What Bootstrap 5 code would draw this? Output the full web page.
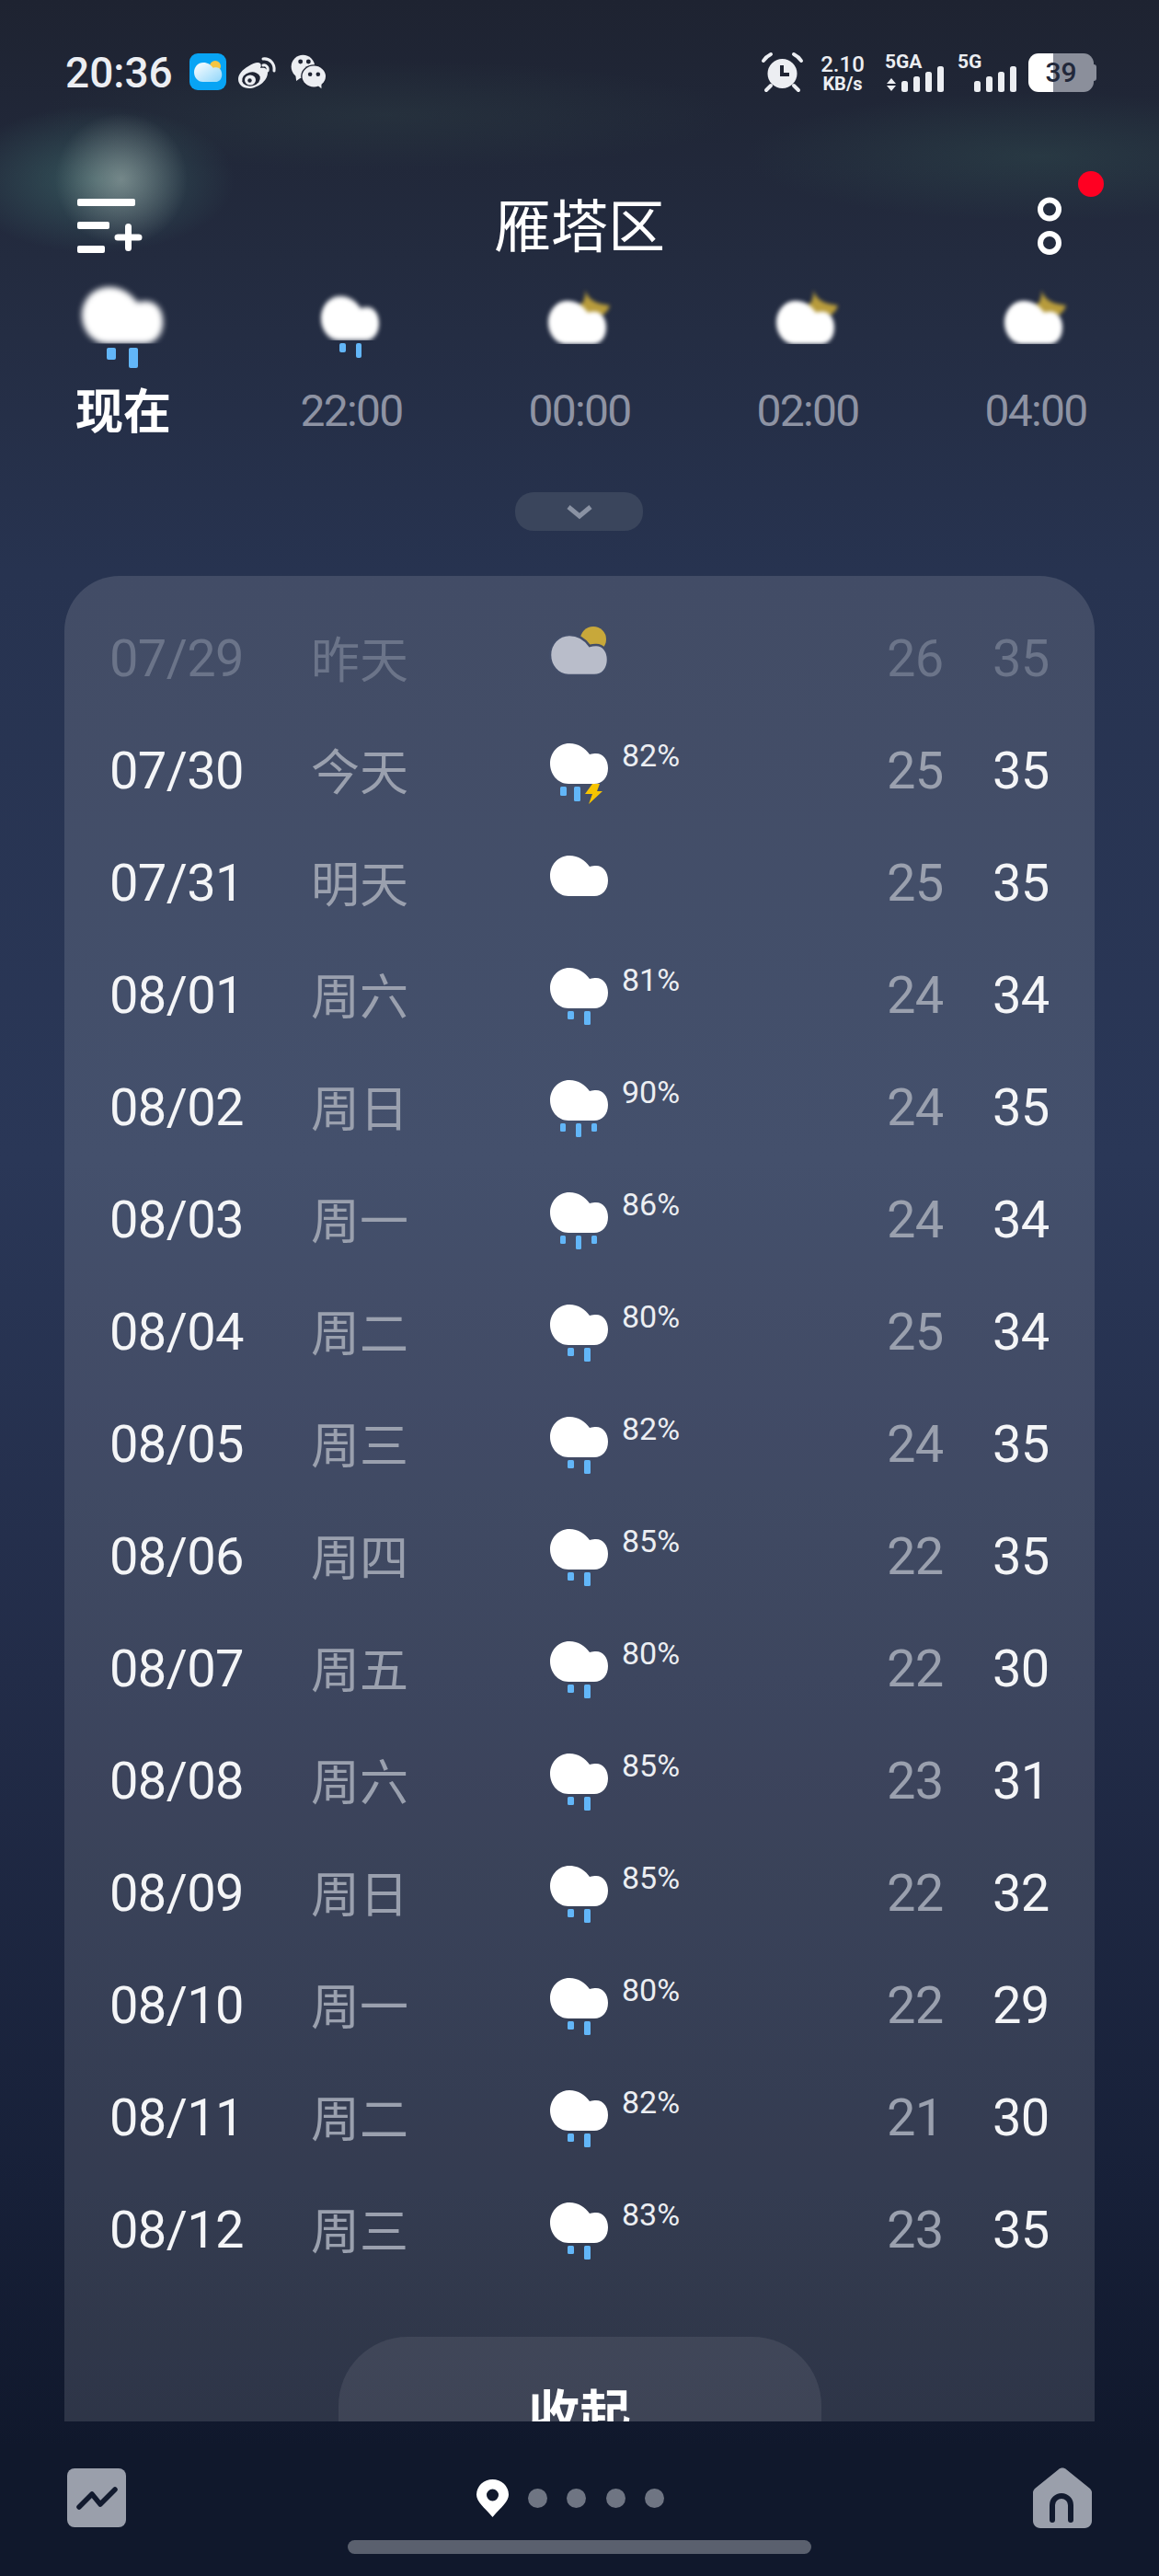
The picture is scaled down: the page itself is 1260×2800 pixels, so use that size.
<!DOCTYPE html>
<html lang="zh-CN">
<head>
    <meta charset="UTF-8">
    <title>雁塔区</title>
    <link href="https://cdn.jsdelivr.net/npm/bootstrap@5.3.3/dist/css/bootstrap.min.css" rel="stylesheet">
    <style>
        body {
            background: #10182c;
            font-family: Roboto, "Noto Sans CJK SC", sans-serif;
            color: #fff;
        }
        svg { display: block; flex: none; overflow: visible; }
        .screen {
            width: 1260px;
            height: 2800px;
            overflow: hidden;
            background:
                radial-gradient(ellipse 72px 72px at 132px 195px, rgba(190,200,195,.48), rgba(190,200,195,0)),
                radial-gradient(ellipse 150px 80px at 105px 195px, rgba(70,125,120,.5), rgba(70,125,120,0)),
                radial-gradient(ellipse 380px 60px at 420px 125px, rgba(65,100,90,.16), rgba(65,100,90,0)),
                radial-gradient(ellipse 320px 70px at 1130px 170px, rgba(60,105,95,.26), rgba(60,105,95,0)),
                linear-gradient(180deg, #1e2331 0, #232b3f 280px, #273350 620px, #2a3757 1260px, #222c48 1820px, #172038 2380px, #10182c 2660px);
        }

        /* status bar */
        .status-bar { padding: 58px 71px 0 71px; height: 100px; }
        .clock { font-size: 46px; line-height: 42px; font-weight: 500; color: #eceef2; width: 135px; }
        .weibo { margin: 4px 0 0 13px; }
        .net-speed { width: 50px; margin: 0 21px 0 19px; color: #eceef2; text-align: center; }
        .net-speed b { display: block; font-size: 24px; line-height: 24px; font-weight: 500; }
        .net-speed i { display: block; font-size: 20px; line-height: 20px; font-weight: 700; font-style: normal; margin-top: -1px; }
        .sig-text { font: 700 21px Roboto, sans-serif; fill: #eceef2; }
        .battery {
            width: 71px;
            height: 42px;
            margin-left: 13px;
            border-radius: 11px;
            background: linear-gradient(90deg, #fff 38%, #8b8f9b 38%);
            color: #22283a;
            font-size: 30px;
            font-weight: 500;
            line-height: 42px;
            text-align: center;
        }
        .battery::after {
            content: "";
            position: absolute;
            left: 71px;
            top: 12px;
            width: 3px;
            height: 18px;
            border-radius: 0 3px 3px 0;
            background: #8b8f9b;
        }

        /* header */
        .top-head {
            display: grid;
            grid-template-columns: 1fr auto 1fr;
            align-items: center;
            height: 100px;
            margin-top: 96px;
            padding: 0 84px;
        }
        .top-head h1 { font-size: 62px; font-weight: 400; margin: -7px 0 0; font-family: "Noto Sans CJK SC", sans-serif; }
        .more-wrap { margin: 0 22px 0 auto; }
        .red-dot { top: -29px; left: 44px; width: 28px; height: 28px; background: #ff0022; }

        /* hourly strip */
        .hour-strip { display: grid; grid-template-columns: repeat(5, 248px); padding: 0 10px; margin-top: 16px; }
        .hour-label { font-size: 48px; line-height: 60px; margin-top: 15px; color: #8e93a3; letter-spacing: -1.7px; }
        .hour-label.now { color: #fff; font-size: 52px; font-weight: 700; letter-spacing: 0; font-family: "Noto Sans CJK SC", sans-serif; margin-top: 12px; }
        .soft { filter: blur(2.2px); }
        .drop-down { width: 139px; height: 42px; margin: 58px 0 0 560px; border-radius: 20px; background: #3a455c; }

        /* daily panel */
        .day-panel {
            height: 2006px;
            margin: 49px 70px 0;
            padding-top: 28px;
            border-radius: 60px 60px 0 0;
            overflow: hidden;
            background: rgba(255,255,255,.125);
        }
        .day-row {
            grid-template-columns: 220px 259px 78px 288px 115px 1fr;
            height: 122px;
            padding-left: 49px;
        }
        .day-date { font-size: 56px; color: #f4f5f7; letter-spacing: -.6px; margin-top: 1px; }
        .day-name { font-size: 53px; color: #9aa0ae; margin-top: 0; margin-left: -1px; font-family: "Noto Sans CJK SC", sans-serif; font-weight: 400; }
        .day-icon { align-self: start; margin-top: 32px; }
        .day-pct { align-self: start; margin-top: 29px; font-size: 34px; line-height: 32px; color: #eceef2; }
        .day-low { font-size: 56px; color: #9aa0ae; letter-spacing: -.6px; margin-top: 1px; }
        .day-high { font-size: 56px; color: #f4f5f7; letter-spacing: -.6px; margin-top: 1px; }
        .day-row.past .day-date, .day-row.past .day-name, .day-row.past .day-low, .day-row.past .day-high { color: #6b7489; }
        .day-row.past .day-icon { margin-top: 36px; }
        .fold-btn {
            width: 525px;
            height: 130px;
            margin: 56px auto 0;
            padding-top: 47px;
            border-radius: 75px 75px 0 0;
            background: rgba(255,255,255,.08);
            font-family: "Noto Sans CJK SC", sans-serif;
            font-size: 56px;
            font-weight: 700;
            line-height: 65px;
            text-align: center;
        }

        /* bottom nav */
        .bottom-nav { height: 66px; margin-top: 50px; padding: 0 73px; }
        .page-dots { gap: 21.6px; margin-right: 20px; }
        .page-dots span { width: 21px; height: 21px; border-radius: 50%; background: #6f7583; }
        .pin { margin-right: -.6px; }
        .home-bar { width: 504px; height: 15px; margin: 13px auto 0; border-radius: 8px; background: #5a606e; }
    </style>
</head>
<body>
<svg width="0" height="0" class="position-absolute">
    <defs>
        <path id="cloudShape" d="M20 44C8 44 0 33 0 22 0 10 9 0 21 0c10 0 17 5 22 12 3-1 5-1 7-1 8 0 13 7 13 16 0 10-6 17-15 17Z"/>
        <clipPath id="cutBottom"><rect x="-10" y="-10" width="90" height="54"/></clipPath>
        <linearGradient id="appCloud" x1="0" y1="0" x2="1" y2="1">
            <stop offset="0" stop-color="#fff"/>
            <stop offset="1" stop-color="#8fd6fa"/>
        </linearGradient>
        <symbol id="moonCloud" viewBox="0 0 100 90">
            <path class="soft" d="M56 3c3 10 10 15 27 17-3 10-13 15-23 14-7-1-12-6-12-13 6-2 9-9 8-18Z" fill="#b89c3c"/>
            <g transform="translate(16 15) scale(1 1.07)"><g clip-path="url(#cutBottom)"><use href="#cloudShape" class="soft" fill="#fff"/></g></g>
        </symbol>
    </defs>
</svg>

<div class="screen d-flex flex-column">
    <!-- status bar -->
    <div class="status-bar d-flex justify-content-between">
        <div class="d-flex">
            <span class="clock">20:36</span>
            <svg width="40" height="40" viewBox="0 0 40 40">
                <rect width="40" height="40" rx="9" fill="#08a4f4"/>
                <circle cx="28" cy="14" r="6" fill="#f5c542"/>
                <use href="#cloudShape" fill="url(#appCloud)" transform="translate(5 10) scale(.48)"/>
            </svg>
            <svg class="weibo" width="42" height="35" viewBox="0 0 42 35">
                <path d="M11 10c6-4 11-5 13-3 1 1 1 3 0 5 5-1 8 1 8 5 0 9-11 17-20 17C5 34 0 30 0 24c0-5 4-10 11-14Z" fill="#eceef2"/>
                <ellipse cx="14" cy="24" rx="10" ry="7.5" transform="rotate(-14 14 24)" fill="#1f2433"/>
                <ellipse cx="13" cy="25" rx="6" ry="5.5" fill="#eceef2"/>
                <circle cx="12.5" cy="25.5" r="2.2" fill="#1f2433"/>
                <path d="M27 2c7-1 13 5 12 13M27 9c3-1 6 2 5 6" fill="none" stroke="#eceef2" stroke-width="3" stroke-linecap="round"/>
            </svg>
            <svg class="ms-2 ps-1" width="45" height="40" viewBox="-4 0 45 40">
                <ellipse cx="14" cy="14" rx="14" ry="14" fill="#eceef2"/>
                <path d="M5 23l1 8 7-5Z" fill="#eceef2"/>
                <circle cx="11" cy="8" r="2.7" fill="#1f2433"/>
                <circle cx="20.5" cy="8" r="2.7" fill="#1f2433"/>
                <ellipse cx="27" cy="25.5" rx="15.5" ry="14" fill="#1f2433"/>
                <ellipse cx="27" cy="25.5" rx="14" ry="12.5" fill="#eceef2"/>
                <path d="M31 36l5 4 0-7Z" fill="#eceef2"/>
                <circle cx="22.5" cy="23" r="2.5" fill="#1f2433"/>
                <circle cx="32" cy="23" r="2.5" fill="#1f2433"/>
            </svg>
        </div>
        <div class="d-flex">
            <svg width="43" height="42" viewBox="0 0 43 42">
                <path d="M1 8c2-3 4-5 8-7M42 8c-2-3-4-5-8-7M4 40l5-5M39 40l-5-5" fill="none" stroke="#eceef2" stroke-width="4" stroke-linecap="round"/>
                <circle cx="21.5" cy="22" r="16" fill="#eceef2"/>
                <path d="M21 13v10h8" fill="none" stroke="#1f2433" stroke-width="4"/>
            </svg>
            <div class="net-speed"><b>2.10</b><i>KB/s</i></div>
            <svg width="64" height="42" viewBox="0 0 64 42">
                <text class="sig-text" x="0" y="16">5GA</text>
                <path d="M7 27l5 6H2ZM7 41l-5-6h10Z" fill="#eceef2"/>
                <rect x="18" y="30" width="7" height="12" rx="2.5" fill="#eceef2"/>
                <rect x="31" y="25" width="7" height="17" rx="2.5" fill="#eceef2"/>
                <rect x="44" y="20" width="7" height="22" rx="2.5" fill="#eceef2"/>
                <rect x="57" y="14" width="7" height="28" rx="2.5" fill="#eceef2"/>
            </svg>
            <svg class="ms-3" width="63" height="42" viewBox="0 0 63 42">
                <text class="sig-text" x="-1" y="16">5G</text>
                <rect x="17" y="30" width="7" height="12" rx="2.5" fill="#eceef2"/>
                <rect x="30" y="25" width="7" height="17" rx="2.5" fill="#eceef2"/>
                <rect x="43" y="20" width="7" height="22" rx="2.5" fill="#eceef2"/>
                <rect x="56" y="14" width="7" height="28" rx="2.5" fill="#eceef2"/>
            </svg>
            <div class="battery position-relative">39</div>
        </div>
    </div>

    <!-- header -->
    <div class="top-head">
        <svg width="70" height="60" viewBox="0 0 70 60">
            <rect width="63" height="8" rx="2" fill="#fff"/>
            <rect y="25" width="35" height="8" rx="2" fill="#fff"/>
            <rect y="51" width="30" height="8" rx="2" fill="#fff"/>
            <path d="M55.5 30.500v23M44 42h23" stroke="#fff" stroke-width="7" stroke-linecap="round"/>
        </svg>
        <h1>雁塔区</h1>
        <div class="more-wrap position-relative">
            <svg width="26" height="62" viewBox="0 0 26 62">
                <ellipse cx="13" cy="12.5" rx="10" ry="10" fill="none" stroke="#fff" stroke-width="6"/>
                <ellipse cx="13" cy="49" rx="10" ry="10" fill="none" stroke="#fff" stroke-width="6"/>
            </svg>
            <span class="red-dot position-absolute rounded-circle"></span>
        </div>
    </div>

    <!-- hourly forecast -->
    <div class="hour-strip text-center">
        <div class="d-flex flex-column align-items-center">
            <svg width="100" height="90" viewBox="0 0 100 90">
                <g transform="translate(5 0) scale(1.4)"><g clip-path="url(#cutBottom)"><use href="#cloudShape" class="soft" fill="#fff"/></g></g>
                <rect x="32" y="66" width="10" height="13" rx="2" fill="#62b6f8"/>
                <rect x="56" y="66" width="10" height="22" rx="2" fill="#62b6f8"/>
            </svg>
            <div class="hour-label now">现在</div>
        </div>
        <div class="d-flex flex-column align-items-center">
            <svg width="100" height="90" viewBox="0 0 100 90">
                <g transform="translate(17 10) scale(1 1.09)"><g clip-path="url(#cutBottom)"><use href="#cloudShape" class="soft" fill="#fff"/></g></g>
                <rect x="37" y="61" width="7" height="10" rx="2" fill="#62b6f8"/>
                <rect x="55" y="61" width="6" height="16" rx="2" fill="#62b6f8"/>
            </svg>
            <div class="hour-label">22:00</div>
        </div>
        <div class="d-flex flex-column align-items-center">
            <svg width="100" height="90"><use href="#moonCloud" width="100" height="90"/></svg>
            <div class="hour-label">00:00</div>
        </div>
        <div class="d-flex flex-column align-items-center">
            <svg width="100" height="90"><use href="#moonCloud" width="100" height="90"/></svg>
            <div class="hour-label">02:00</div>
        </div>
        <div class="d-flex flex-column align-items-center">
            <svg width="100" height="90"><use href="#moonCloud" width="100" height="90"/></svg>
            <div class="hour-label">04:00</div>
        </div>
    </div>

    <div class="drop-down d-flex align-items-center justify-content-center">
        <svg width="30" height="16" viewBox="0 0 30 16">
            <path d="M3 3l12 10L27 3" fill="none" stroke="#8a92a3" stroke-width="5"/>
        </svg>
    </div>

    <!-- daily forecast -->
    <div class="day-panel">
        <div id="dayRows"></div>
        <div class="fold-btn">收起</div>
    </div>

    <!-- bottom nav -->
    <div class="bottom-nav d-flex align-items-center justify-content-between">
        <svg width="64" height="64" viewBox="0 0 64 64">
            <rect width="64" height="64" rx="8" fill="#9a9fab"/>
            <path d="M13 42l14-14 9 11 16-16" fill="none" stroke="#121a2e" stroke-width="5.5" stroke-linecap="round" stroke-linejoin="round"/>
        </svg>
        <div class="page-dots d-flex align-items-center">
            <svg class="pin" width="35" height="41" viewBox="0 0 35 41">
                <path fill-rule="evenodd" d="M17.5 41C8 30 0 24 0 16.500A17.500 16.500 0 0 1 35 16.500C35 24 27 30 17.500 41ZM17.500 10.500a6.500 6.500 0 1 0 0 13 6.500 6.500 0 0 0 0-13Z" fill="#fff"/>
            </svg>
            <span></span><span></span><span></span><span></span>
        </div>
        <svg width="64" height="66" viewBox="0 0 64 66">
            <path d="M28 2c2-2 6-2 8 0l26 21c1 1 2 3 2 4v31c0 4-3 8-8 8H8c-5 0-8-4-8-8V27c0-1 1-3 2-4Z" fill="#9a9fab"/>
            <path d="M21 57V41a10 10 0 0 1 20 0v16" fill="none" stroke="#121a2e" stroke-width="6" stroke-linecap="round"/>
        </svg>
    </div>
    <div class="home-bar"></div>
</div>

<script>
    // date, day, icon, percent, low, high
    const days = [
        ['07/29', '昨天', 'sun', '', 26, 35],
        ['07/30', '今天', 'storm', '82%', 25, 35],
        ['07/31', '明天', 'cloud', '', 25, 35],
        ['08/01', '周六', 'rain', '81%', 24, 34],
        ['08/02', '周日', 'rain3', '90%', 24, 35],
        ['08/03', '周一', 'rain3', '86%', 24, 34],
        ['08/04', '周二', 'rain', '80%', 25, 34],
        ['08/05', '周三', 'rain', '82%', 24, 35],
        ['08/06', '周四', 'rain', '85%', 22, 35],
        ['08/07', '周五', 'rain', '80%', 22, 30],
        ['08/08', '周六', 'rain', '85%', 23, 31],
        ['08/09', '周日', 'rain', '85%', 22, 32],
        ['08/10', '周一', 'rain', '80%', 22, 29],
        ['08/11', '周二', 'rain', '82%', 21, 30],
        ['08/12', '周三', 'rain', '83%', 23, 35]
    ];

    const blue = 'fill="#62b6f8"';
    const cloud = '<use href="#cloudShape" fill="#fff"/>';
    const icons = {
        cloud: cloud,
        sun: `<circle cx="47" cy="5" r="14" fill="#c8a83a"/>
              <use href="#cloudShape" fill="#b9bdca" stroke="#434e69" stroke-width="2.500"/>`,
        rain: `${cloud}<rect x="19" y="47" width="7" height="9" rx="1.500" ${blue}/><rect x="37" y="47" width="7" height="15" rx="1.500" ${blue}/>`,
        rain3: `${cloud}<rect x="11" y="47" width="6" height="9" rx="1.500" ${blue}/><rect x="28" y="47" width="6" height="15" rx="1.500" ${blue}/><rect x="45" y="47" width="6" height="9" rx="1.500" ${blue}/>`,
        storm: `${cloud}<rect x="11" y="47" width="7" height="10" rx="1.500" ${blue}/><rect x="26" y="47" width="7" height="16" rx="1.500" ${blue}/>
                <path d="M46 44h8l-3 8h6L42 66l4-11h-8Z" fill="#f7c400"/>`
    };

    const rows = document.getElementById('dayRows');
    days.forEach((d, i) => {
        rows.innerHTML += `<div class="day-row d-grid align-items-center ${i === 0 ? 'past' : ''}">
            <span class="day-date">${d[0]}</span>
            <span class="day-name">${d[1]}</span>
            <svg class="day-icon" width="64" height="64" viewBox="0 0 64 64">${icons[d[2]]}</svg>
            <span class="day-pct">${d[3]}</span>
            <span class="day-low">${d[4]}</span>
            <span class="day-high">${d[5]}</span>
        </div>`;
    });
</script>
<script src="https://cdn.jsdelivr.net/npm/bootstrap@5.3.3/dist/js/bootstrap.bundle.min.js"></script>
</body>
</html>
